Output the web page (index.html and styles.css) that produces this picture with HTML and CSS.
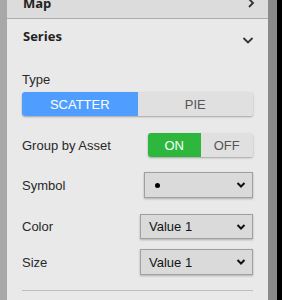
FILE: index.html
```html
<!DOCTYPE html>
<html>
  <head>
    <title>Series settings</title>
    <link rel="stylesheet" href="styles.css">
  </head>
  <body>
    <div class="frame">
      <div class="panel">
        <!-- collapsed section -->
        <div class="section-head map-head">
          <span>Map</span>
          <svg class="chev" width="10" height="10" viewBox="0 0 10 10"><path d="M3 1 L7 5 L3 9" fill="none" stroke="#333" stroke-width="1.8"/></svg>
        </div>
        <!-- open section -->
        <div class="section-head series-head">
          <span>Series</span>
          <svg class="chev" width="12" height="10" viewBox="0 0 12 10"><path d="M1.5 3 L6 7.5 L10.5 3" fill="none" stroke="#333" stroke-width="1.8"/></svg>
        </div>
        <div class="series-body">
          <div class="field-label">Type</div>
          <div class="segmented">
            <div class="seg active">SCATTER</div>
            <div class="seg">PIE</div>
          </div>

          <div class="row group-row">
            <span class="row-label">Group by Asset</span>
            <div class="toggle">
              <div class="tog on">ON</div>
              <div class="tog">OFF</div>
            </div>
          </div>

          <div class="row symbol-row">
            <span class="row-label">Symbol</span>
            <div class="dropdown symbol-drop">
              <span class="dot"></span>
              <svg class="drop-arrow" width="10" height="8" viewBox="0 0 10 8"><path d="M1.5 2 L5 5.5 L8.5 2" fill="none" stroke="#111" stroke-width="2"/></svg>
            </div>
          </div>

          <div class="row color-row">
            <span class="row-label">Color</span>
            <div class="dropdown">
              <span>Value 1</span>
              <svg class="drop-arrow" width="10" height="8" viewBox="0 0 10 8"><path d="M1.5 2 L5 5.5 L8.5 2" fill="none" stroke="#111" stroke-width="2"/></svg>
            </div>
          </div>

          <div class="row size-row">
            <span class="row-label">Size</span>
            <div class="dropdown">
              <span>Value 1</span>
              <svg class="drop-arrow" width="10" height="8" viewBox="0 0 10 8"><path d="M1.5 2 L5 5.5 L8.5 2" fill="none" stroke="#111" stroke-width="2"/></svg>
            </div>
          </div>

          <div class="divider"></div>
        </div>
      </div>
      <div class="gutter"></div>
    </div>
  </body>
</html>
```
FILE: styles.css
```css
body{
  margin: 0;
  padding: 0;
  background-color: #000;
  font-family: "Liberation Sans", Arial, sans-serif;
  overflow: hidden;
}
.frame{
  display: flex;
  flex-direction: row;
  height: 300px;
  width: 277px;
  background-color: rgb(168, 168, 168);
  padding-left: 7px;
  box-sizing: border-box;
  overflow: hidden;
}
.panel{
  width: 261px;
  background-color: rgb(233, 233, 233);
  margin-top: -19px;
}
.gutter{
  width: 9px;
  background-color: rgb(138, 138, 138);
}
.section-head{
  display: flex;
  justify-content: space-between;
  align-items: center;
  font-family: "Open Sans", sans-serif;
  font-weight: 700;
  font-size: 13px;
  color: rgb(34, 34, 34);
  padding-left: 16px;
  padding-right: 14px;
}
.map-head{
  background-color: rgb(220, 220, 220);
  border-bottom: 1px solid rgb(172, 172, 172);
  padding-top: 6px;
  padding-right: 12px;
  box-sizing: border-box;
  height: 38px;
}
.series-head{
  height: 34px;
}
.series-head .chev{
  margin-top: 8px;
}
.series-body{
  padding: 0 15px;
}
.field-label{
  font-size: 13px;
  color: rgb(40, 40, 40);
  margin-top: 19px;
  line-height: 16px;
}
.segmented{
  display: flex;
  margin-top: 4px;
  height: 24px;
  border-radius: 3px;
  box-shadow: 0 1px 2px rgba(0, 0, 0, 0.3);
  overflow: hidden;
}
.seg{
  flex: 1;
  display: flex;
  align-items: center;
  justify-content: center;
  font-size: 13px;
  color: rgb(85, 85, 85);
  background-color: rgb(224, 224, 224);
}
.seg.active{
  color: #fff;
  background-color: rgb(79, 158, 255);
}
.row{
  display: flex;
  justify-content: space-between;
  align-items: center;
}
.row-label{
  font-size: 13px;
  color: rgb(40, 40, 40);
}
.group-row{
  margin-top: 17px;
  height: 24px;
}
.toggle{
  display: flex;
  width: 105px;
  height: 24px;
  border-radius: 3px;
  box-shadow: 0 1px 2px rgba(0, 0, 0, 0.3);
  overflow: hidden;
}
.tog{
  flex: 1;
  display: flex;
  align-items: center;
  justify-content: center;
  font-size: 13px;
  color: rgb(85, 85, 85);
  background-color: rgb(224, 224, 224);
}
.tog.on{
  color: #fff;
  background-color: rgb(45, 184, 61);
}
.dropdown{
  display: flex;
  justify-content: space-between;
  align-items: center;
  width: 113px;
  height: 25px;
  box-sizing: border-box;
  padding: 0 6px 0 8px;
  background-color: rgb(218, 218, 218);
  border: 1px solid rgb(160, 160, 160);
  box-shadow: 0 1px 2px rgba(0, 0, 0, 0.25);
  font-size: 13px;
  color: rgb(20, 20, 20);
}
.symbol-row{
  margin-top: 15px;
  height: 26px;
}
.symbol-drop{
  width: 109px;
  height: 26px;
  padding-left: 10px;
}
.dot{
  width: 5px;
  height: 5px;
  border-radius: 50%;
  background-color: #000;
}
.color-row{
  margin-top: 16px;
  height: 25px;
}
.size-row{
  margin-top: 10px;
  height: 26px;
}
.size-row .dropdown{
  height: 26px;
}
.divider{
  margin-top: 15px;
  height: 1px;
  background-color: rgb(190, 190, 190);
}
```
